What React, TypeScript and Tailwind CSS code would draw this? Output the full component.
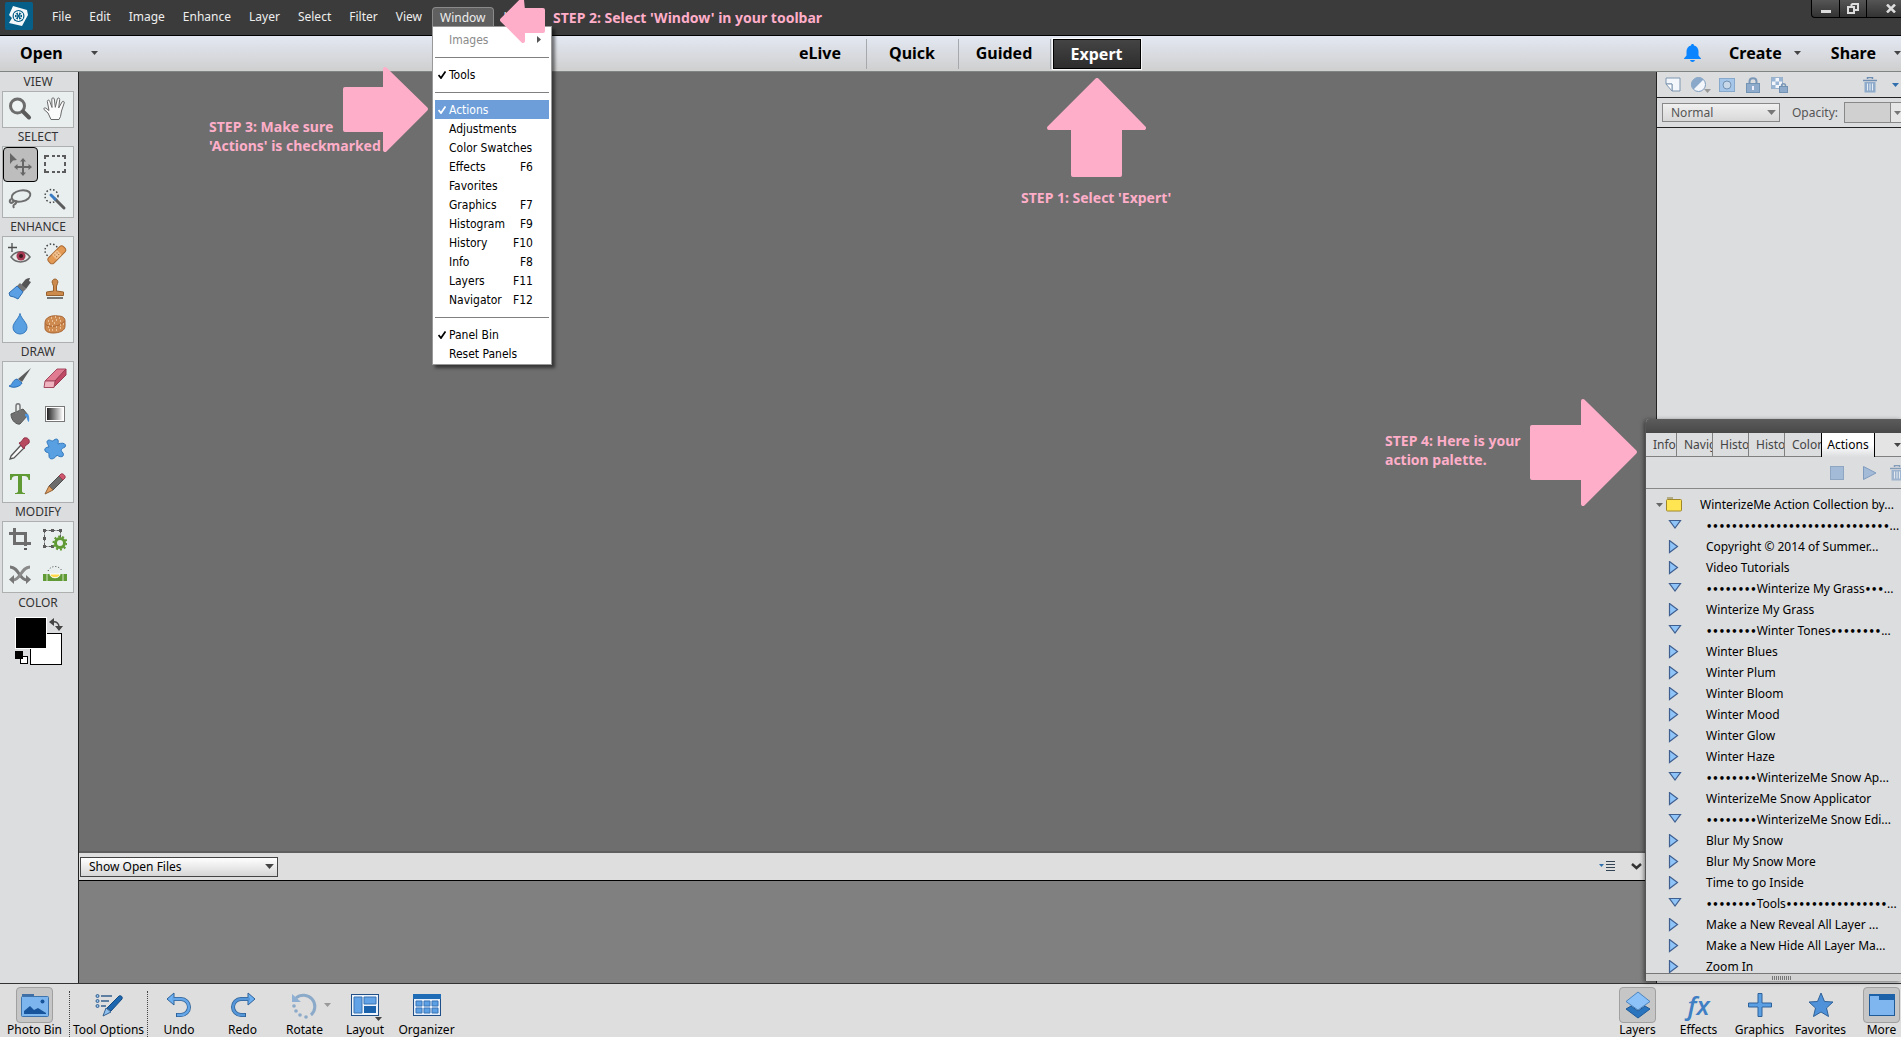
/**
 * App.tsx
 *
 * Photo editor workspace with the Window menu open and the four
 * walkthrough steps drawn over it.
 */

import { useState, type ReactNode } from 'react';

interface ToolGroup {
    title: string;
    tools: { name: string; icon: ReactNode }[];
}

interface MenuEntry {
    label: string;
    shortcut?: string;
    checked?: boolean;
    submenu?: boolean;
}

interface ActionRow {
    label?: string;
    before?: number;
    after?: number;
    more?: boolean;
}

const TOOL_GROUPS: ToolGroup[] = [
    {
        title: 'VIEW',
        tools: [
            {
                name: 'Zoom',
                icon: (
                    <>
                        <circle cx="9.5" cy="9" r="7" fill="#eef3f3" stroke="#6d6d6d" strokeWidth="3" />
                        <path d="M15 14.5l6 6" stroke="#5a5a5a" strokeWidth="4" strokeLinecap="round" />
                    </>
                ),
            },
            {
                name: 'Hand',
                icon: (
                    <path
                        d="M8 22.5L5 16 1 12.5c-.6-1.200.6-2.200 1.800-1.400L6 13.500 4.300 4.500c0-1.700 2-1.900 2.400-.3L9 10.500 8.800 2c.2-1.600 2.200-1.600 2.500 0l1 8.300L14.300 2c.5-1.600 2.500-1.200 2.400.4l-1 8.500 3.400-6c.9-1.300 2.600-.4 2.100 1.100L18.500 14l-1 5.500-1.500 3z"
                        fill="#fbfbfb"
                        stroke="#6a6a6a"
                    />
                ),
            },
        ],
    },
    {
        title: 'SELECT',
        tools: [
            {
                name: 'Move',
                icon: (
                    <>
                        <path d="M2 1v11l3-3.500 4-.5z" fill="#666" />
                        <path
                            d="M15 6l-3 3.500h2V14H9.500v-2L6 15l3.500 3v-2H14v4.500h-2L15 24l3-3.500h-2V16h4.500v2l3.500-3-3.500-3v2H16V9.500h2z"
                            fill="#666"
                        />
                    </>
                ),
            },
            {
                name: 'Marquee',
                icon: (
                    <path
                        d="M2 7V4h4M9 4h3M14 4h3M19 4h3v3M22 10v4M22 17v3h-3M17 20h-3M12 20H9M6 20H2v-3M2 14v-4"
                        fill="none"
                        stroke="#5c5c5c"
                        strokeWidth="2"
                    />
                ),
            },
            {
                name: 'Lasso',
                icon: (
                    <>
                        <ellipse cx="13" cy="9" rx="9.500" ry="5.500" transform="rotate(-12 13 9)" fill="none" stroke="#6d6d6d" strokeWidth="2" />
                        <path d="M3 12c-3 3 0 5 2 3s4-1 3 1-4 1-2 5" fill="none" stroke="#6d6d6d" strokeWidth="2" />
                    </>
                ),
            },
            {
                name: 'Quick selection',
                icon: (
                    <>
                        <circle cx="8.500" cy="9" r="6.500" fill="none" stroke="#444" strokeWidth="1.500" strokeDasharray="1.500 2" />
                        <path d="M12 12l9 9" stroke="#5c5c5c" strokeWidth="3" strokeLinecap="round" />
                        <path d="M8 8l4 4" stroke="#3a7cc4" strokeWidth="3" strokeLinecap="round" />
                    </>
                ),
            },
        ],
    },
    {
        title: 'ENHANCE',
        tools: [
            {
                name: 'Red eye',
                icon: (
                    <>
                        <path d="M4 1v9M0 5.500h9" stroke="#4d4d4d" strokeWidth="1.300" />
                        <path d="M3 15c5-7 14-7 19 0-5 6.500-14 6.500-19 0z" fill="#e8eaea" stroke="#6a6a6a" strokeWidth="1.500" />
                        <circle cx="13" cy="14" r="4.500" fill="#a63a52" />
                        <circle cx="13" cy="14" r="2" fill="#3a1a22" />
                    </>
                ),
            },
            {
                name: 'Spot healing',
                icon: (
                    <>
                        <circle cx="8.500" cy="8.500" r="6.500" fill="none" stroke="#444" strokeWidth="1.500" strokeDasharray="1.500 2" />
                        <g transform="rotate(-45 14 13)">
                            <rect x="3.500" y="9" width="21" height="7.500" rx="3" fill="#e39a55" stroke="#a96a33" />
                            <rect x="10.500" y="9.500" width="7" height="6.500" fill="#f2c08c" />
                            <path d="M12 11.500h1M15 11.500h1M12 14h1M15 14h1" stroke="#94602f" />
                        </g>
                    </>
                ),
            },
            {
                name: 'Smart brush',
                icon: (
                    <>
                        <path d="M13 8l4-5c1-1 2-2 5-2l-1 3 2 1-5 7z" fill="#555" />
                        <path d="M12 6l6 6-3 3-6-6z" fill="#747474" />
                        <path d="M9 9l6 6-5 7-4-2-4-1-1-3z" fill="#5b9fe4" stroke="#2f6eb0" />
                    </>
                ),
            },
            {
                name: 'Clone stamp',
                icon: (
                    <>
                        <path
                            d="M12 2a3 3 0 0 0-2.500 4.500L10.500 9v5L3.500 15v3.500h17V15l-7-1V9l1-2.500A3 3 0 0 0 12 2z"
                            fill="#cc8a4d"
                            stroke="#97602c"
                        />
                        <path d="M4 21h16" stroke="#4d4d4d" strokeWidth="1.500" />
                    </>
                ),
            },
            {
                name: 'Blur',
                icon: <path d="M12 1.500c1 5 7 9 7 14a7 6.500 0 0 1-14 0c0-5 6-9 7-14z" fill="#58a0e2" stroke="#3478bc" />,
            },
            {
                name: 'Sponge',
                icon: (
                    <>
                        <path d="M2 11c0-6 7-8 13-7 5 0 7 2 7 5v5c0 5-6 7-12 7-5 0-8-2-8-5z" fill="#cf8a50" stroke="#a86532" />
                        <path d="M2.500 12c3 4 15 3 19-3" fill="none" stroke="#a86532" />
                        <path
                            d="M5 9h1M8 6h1M9 9h1M12 5h1M13 8h1M16 6h1M17 9h1M6 12h1M11 11h1M5 15h1M6 18h1M9 14h1M9 18h1M13 15h1M13 18h1M17 13h1M17 16h1M20 12h1"
                            stroke="#f4d2b0"
                            strokeWidth="1.500"
                        />
                    </>
                ),
            },
        ],
    },
    {
        title: 'DRAW',
        tools: [
            {
                name: 'Brush',
                icon: (
                    <>
                        <path d="M10 12L23 1l-9 14z" fill="#5c5c5c" />
                        <path d="M9 12l5 4c-1 3-8 6-13 3 4-1 3-6 8-7z" fill="#4d97e0" stroke="#2e6fb5" />
                    </>
                ),
            },
            {
                name: 'Eraser',
                icon: (
                    <>
                        <path d="M2 14L14 2h9L12 14z" fill="#e07b92" stroke="#a34a60" />
                        <path d="M12 14L23 2v6L11 20z" fill="#c04a66" stroke="#9a3a52" />
                        <path d="M2 14h10l-1 6.500H1z" fill="#f0b3c0" stroke="#a34a60" />
                    </>
                ),
            },
            {
                name: 'Paint bucket',
                icon: (
                    <>
                        <path d="M3 12l12-5 5 6-8 9c-3 1-9-3-9-10z" fill="#707070" stroke="#555" />
                        <path d="M8 12V4c0-3 4-3 4 0v6" fill="none" stroke="#777" strokeWidth="1.500" />
                        <path d="M17 12c3-1 5 1 4 8-3-2-1-5-4-6z" fill="#4d97e0" />
                    </>
                ),
            },
            {
                name: 'Gradient',
                icon: (
                    <>
                        <defs>
                            <linearGradient id="toolGradient">
                                <stop offset="0" stopColor="#222" />
                                <stop offset="1" stopColor="#fff" />
                            </linearGradient>
                        </defs>
                        <rect x="2.500" y="4.500" width="19" height="15" fill="#fff" stroke="#777" />
                        <rect x="4" y="6" width="16" height="12" fill="url(#toolGradient)" />
                    </>
                ),
            },
            {
                name: 'Eyedropper',
                icon: (
                    <>
                        <path d="M3 19L13 8l3 3L6 21l-4 1z" fill="#fafafa" stroke="#555" strokeWidth="1.300" />
                        <path d="M11 6l2-1 3-4c4-1 6 2 5 5l-4 3-1 3z" fill="#b84a60" stroke="#90344a" />
                    </>
                ),
            },
            {
                name: 'Custom shape',
                icon: (
                    <path
                        d="M11 3c3-2 5-1 4 4 5-2 9 0 7 3-4 2-5 3-2 6 2 4-3 5-6 2-3 5-8 5-8 1 0-3 0-3-3-4-3-3 0-5 3-5-1-3-4-6 0-7 2 0 3 2 5 0z"
                        fill="#58a0e2"
                        stroke="#3478bc"
                    />
                ),
            },
            {
                name: 'Type',
                icon: (
                    <path d="M2 2h20v6h-1.500c-.5-3-1.500-4-4-4H14v15c0 1.500 1 2 3 2v1H7v-1c2 0 3-.5 3-2V4H7.500C5 4 4 5 3.500 8H2z" fill="#5f9a34" />
                ),
            },
            {
                name: 'Pencil',
                icon: (
                    <>
                        <path d="M6 14L16 4l4 4L10 18z" fill="#6c6c6c" stroke="#505050" />
                        <path d="M16 4l2-2c2-1 5 2 4 4l-2 2z" fill="#d0586e" stroke="#9c3c50" />
                        <path d="M6 14l4 4-8 4z" fill="#e3a063" stroke="#8f6136" />
                    </>
                ),
            },
        ],
    },
    {
        title: 'MODIFY',
        tools: [
            {
                name: 'Crop',
                icon: (
                    <>
                        <path d="M6.500 1v15.500H23M1 6.500h16.500V19" fill="none" stroke="#6d6d6d" strokeWidth="3" />
                        <path d="M16 21h3v2h-3z" fill="#5a5a5a" />
                    </>
                ),
            },
            {
                name: 'Recompose',
                icon: (
                    <>
                        <path d="M1.500 3.500h16v8M1.500 3.500v16h9" fill="none" stroke="#5c5c5c" strokeDasharray="3 1" />
                        <path d="M0 2h3v3H0zM8 2h3v3H8zM16 2h3v3h-3zM0 10h3v3H0zM0 18h3v3H0zM8 18h3v3H8z" fill="#5c5c5c" />
                        <circle cx="17" cy="16" r="4.500" fill="none" stroke="#5f9a34" strokeWidth="3" />
                        <circle cx="17" cy="16" r="6.500" fill="none" stroke="#5f9a34" strokeWidth="2" strokeDasharray="2 2" />
                    </>
                ),
            },
            {
                name: 'Content-aware move',
                icon: (
                    <>
                        <path d="M2 5c9 0 9 13 17 13" fill="none" stroke="#777" strokeWidth="3" />
                        <path d="M22 5C13 5 13 18 5 18" fill="none" stroke="#8a8a8a" strokeWidth="3" />
                        <path d="M6 13v9l-5-4.500zM18 13v9l5-4.500z" fill="#777" />
                    </>
                ),
            },
            {
                name: 'Straighten',
                icon: (
                    <>
                        <path d="M5 9c3-6 11-6 14 0" fill="none" stroke="#444" strokeDasharray="1 2" />
                        <path d="M0 12h24v7H0z" fill="#5f9a34" />
                        <path d="M4 12v7M20 12v7" stroke="#d5e5c5" />
                        <path d="M7 12h10c0 5-10 5-10 0z" fill="#ffd94a" stroke="#fff" />
                    </>
                ),
            },
        ],
    },
];

const MENUS = ['File', 'Edit', 'Image', 'Enhance', 'Layer', 'Select', 'Filter', 'View'];

const WINDOW_MENU: MenuEntry[][] = [
    [{ label: 'Images', submenu: true }],
    [{ label: 'Tools', checked: true }],
    [
        { label: 'Actions', checked: true },
        { label: 'Adjustments' },
        { label: 'Color Swatches' },
        { label: 'Effects', shortcut: 'F6' },
        { label: 'Favorites' },
        { label: 'Graphics', shortcut: 'F7' },
        { label: 'Histogram', shortcut: 'F9' },
        { label: 'History', shortcut: 'F10' },
        { label: 'Info', shortcut: 'F8' },
        { label: 'Layers', shortcut: 'F11' },
        { label: 'Navigator', shortcut: 'F12' },
    ],
    [{ label: 'Panel Bin', checked: true }, { label: 'Reset Panels' }],
];

const PALETTE_TABS = ['Info', 'Navig', 'Histo', 'Histo', 'Color'];

// before / after count the bullets around a section heading
const ACTIONS: ActionRow[] = [
    { before: 29, more: true },
    { label: 'Copyright © 2014 of Summer...' },
    { label: 'Video Tutorials' },
    { label: 'Winterize My Grass', before: 8, after: 3, more: true },
    { label: 'Winterize My Grass' },
    { label: 'Winter Tones', before: 8, after: 8, more: true },
    { label: 'Winter Blues' },
    { label: 'Winter Plum' },
    { label: 'Winter Bloom' },
    { label: 'Winter Mood' },
    { label: 'Winter Glow' },
    { label: 'Winter Haze' },
    { label: 'WinterizeMe Snow Ap', before: 8, more: true },
    { label: 'WinterizeMe Snow Applicator' },
    { label: 'WinterizeMe Snow Edi', before: 8, more: true },
    { label: 'Blur My Snow' },
    { label: 'Blur My Snow More' },
    { label: 'Time to go Inside' },
    { label: 'Tools', before: 8, after: 16, more: true },
    { label: 'Make a New Reveal All Layer ...' },
    { label: 'Make a New Hide All Layer Ma...' },
    { label: 'Zoom In' },
];

function Caret({ className = 'text-[#444]', size = 7 }: { className?: string; size?: number }) {
    return (
        <svg width={size} height={size === 7 ? 4 : 5} viewBox="0 0 7 4" className={`shrink-0 ${className}`}>
            <path d="M0 0h7L3.500 4z" fill="currentColor" />
        </svg>
    );
}

function Bullets({ count = 0 }: { count?: number }) {
    return (
        <span className="font-['DejaVu_Sans_Condensed','DejaVu_Sans',sans-serif] text-[11px] font-bold">{'•'.repeat(count)}</span>
    );
}

function TrashIcon() {
    return (
        <svg width="16" height="16" viewBox="0 0 16 16" className="shrink-0">
            <path d="M5.500 2V.5h5V2M1 3.500h14" fill="none" stroke="#6f8fb2" strokeWidth="1.500" />
            <path d="M2.500 5h11v10.500h-11z" fill="#8fabcb" />
            <path d="M5.500 6.500v7M8 6.500v7M10.500 6.500v7" stroke="#e6edf5" />
        </svg>
    );
}

function MenuBar() {
    return (
        <header className="relative z-20 flex h-9 shrink-0 items-start justify-between border-b border-black bg-[#3b3b3b]">
            <div className="flex items-start">
                <svg width="28" height="28" viewBox="0 0 28 28" className="mt-[2px] ml-[5px]">
                    <rect width="28" height="28" rx="2" fill="#065f88" />
                    <path d="M8 4l14 4 1 5-6 11-13-3 3-5-3-3z" fill="#f4f8fa" />
                    <circle cx="13.500" cy="14" r="6" fill="#065f88" />
                    <circle cx="13.500" cy="14" r="4.200" fill="none" stroke="#f4f8fa" strokeWidth="1.200" />
                    <path d="M13.500 9v10M9 11.500l9 5M9 16.500l9-5" stroke="#f4f8fa" />
                    <circle cx="13.500" cy="14" r="1.500" fill="#065f88" />
                </svg>
                <nav className="mt-[7px] ml-[11px] flex gap-[2px]">
                    {MENUS.map((menu) => (
                        <button key={menu} className="h-5 px-2 leading-5 text-[#eee]">
                            {menu}
                        </button>
                    ))}
                    <div className="relative">
                        <button className="h-5 rounded-t-sm border border-b-0 border-[#8a8a8a] bg-[#606060] px-[7px] leading-[18px] text-[#eee]">
                            Window
                        </button>
                        <WindowMenu />
                    </div>
                    <button className="h-5 px-2 leading-5 text-[#eee]">Help</button>
                </nav>
            </div>
            <div className="flex h-[18px] rounded-bl-sm border-b border-l border-black bg-gradient-to-b from-[#555] to-[#333] text-[#ddd]">
                <button aria-label="Minimize" className="flex w-7 items-center justify-center border-r border-black">
                    <svg width="10" height="10" viewBox="0 0 10 10">
                        <path d="M0 6h10v3H0z" fill="currentColor" />
                    </svg>
                </button>
                <button aria-label="Restore" className="flex w-[27px] items-center justify-center border-r border-black">
                    <svg width="12" height="11" viewBox="0 0 12 11">
                        <path d="M4.500 1h6.500v6H8M4.500 1v3M1 4h6v6H1z" fill="none" stroke="currentColor" strokeWidth="2" />
                    </svg>
                </button>
                <button aria-label="Close" className="flex w-[34px] items-center justify-end pr-[5px]">
                    <svg width="10" height="9" viewBox="0 0 10 9">
                        <path d="M1 0.500l8 8M9 .5l-8 8" stroke="currentColor" strokeWidth="2.500" />
                    </svg>
                </button>
            </div>
        </header>
    );
}

function WindowMenu() {
    return (
        <div
            role="menu"
            className="absolute top-[19px] left-0 w-[120px] border border-[#999] bg-white px-[2px] pt-[3px] pb-px font-['DejaVu_Sans_Condensed','DejaVu_Sans',sans-serif] text-xs text-black shadow-[3px_3px_3px_rgba(0,0,0,0.5)]"
        >
            {WINDOW_MENU.map((section, index) => (
                <div key={index}>
                    {index > 0 && <div className="mt-2 mb-[7px] h-px bg-[#808080]" />}
                    {section.map((entry) => (
                        <button
                            key={entry.label}
                            role="menuitem"
                            className={`flex h-[19px] w-full items-center pr-4 text-left ${
                                entry.label === 'Actions' ? 'bg-[#6d9ed9] text-white' : entry.submenu ? 'text-[#8a8a8a]' : ''
                            }`}
                        >
                            <span className="flex w-[14px] shrink-0 justify-center">
                                {entry.checked && (
                                    <svg width="8" height="8" viewBox="0 0 8 8">
                                        <path d="M.5 4l2.500 3 4.500-6.500" fill="none" stroke="currentColor" strokeWidth="1.800" />
                                    </svg>
                                )}
                            </span>
                            <span className="flex-1 whitespace-nowrap">{entry.label}</span>
                            {entry.shortcut && <span>{entry.shortcut}</span>}
                            {entry.submenu && (
                                <svg width="4" height="7" viewBox="0 0 4 7" className="-mr-2">
                                    <path d="M0 0l4 3.500L0 7z" fill="#555" />
                                </svg>
                            )}
                        </button>
                    ))}
                </div>
            ))}
        </div>
    );
}

function ModeBar() {
    const [mode, setMode] = useState('Expert');

    return (
        <div className="grid h-9 shrink-0 grid-cols-[1fr_auto_1fr] items-center border-b border-[#808482] bg-gradient-to-b from-[#e3e8f2] to-[#cfcfcf] text-base font-bold text-black">
            <div className="flex items-center pb-[2px] pl-5">
                <button className="flex items-center gap-7">
                    Open <Caret />
                </button>
            </div>
            <nav className="flex pl-4">
                {['eLive', 'Quick', 'Guided', 'Expert'].map((name) => (
                    <button
                        key={name}
                        onClick={() => setMode(name)}
                        className={
                            name === mode
                                ? 'mx-[2px] h-[30px] w-[88px] border border-black bg-gradient-to-b from-[#444] to-[#2d2d2d] text-white outline outline-white/80'
                                : 'h-[30px] w-[92px] border-r border-[#a5a8ad] pb-px'
                        }
                    >
                        {name}
                    </button>
                ))}
            </nav>
            <div className="flex items-center justify-end pb-[2px]">
                <button aria-label="Notifications" className="mr-7">
                    <svg width="17" height="18" viewBox="0 0 17 18">
                        <path
                            d="M8.500 0c1 0 1.500.7 1.500 1.500 3 .8 4.500 3 4.500 6v4l2.500 3v.5H0v-.5l2.500-3v-4c0-3 1.500-5.200 4.500-6C7 .7 7.500 0 8.500 0zM6 16h5c-.5 2.600-4.500 2.600-5 0z"
                            fill="#0a84ff"
                        />
                    </svg>
                </button>
                <button className="mr-[30px] flex items-center gap-3">
                    Create <Caret />
                </button>
                <button className="flex items-center gap-[18px]">
                    Share <Caret />
                </button>
            </div>
        </div>
    );
}

function ToolPanel() {
    const [active, setActive] = useState('Move');

    return (
        <aside className="w-[79px] shrink-0 border-r border-[#222] bg-[#dcdddf] pr-1 pl-[2px]">
            {TOOL_GROUPS.map((group) => (
                <section key={group.title}>
                    <h2 className="h-[19px] text-center leading-5 text-[#333]">{group.title}</h2>
                    <div className="grid grid-cols-2 border border-b-0 border-[#aeb0b0] bg-[#e9efef] shadow-[0_1px_0_#aeb0b0]">
                        {group.tools.map((tool) => (
                            <button
                                key={tool.name}
                                aria-label={tool.name}
                                onClick={() => setActive(tool.name)}
                                className={`flex h-[35px] items-center justify-center pr-[2px] pb-[2px] ${
                                    tool.name === active ? 'rounded border border-black bg-[#bdbdbd]' : ''
                                }`}
                            >
                                <svg width="24" height="24" viewBox="0 0 24 24" fill="none">
                                    {tool.icon}
                                </svg>
                            </button>
                        ))}
                    </div>
                </section>
            ))}
            <h2 className="h-[25px] text-center leading-[22px] text-[#333]">COLOR</h2>
            <button aria-label="Foreground and background colors" className="block pl-[13px]">
                <svg width="48" height="48" viewBox="0 0 48 48">
                    <rect x="15.500" y="16.500" width="31" height="31" fill="#fff" stroke="#000" />
                    <rect x=".5" y=".5" width="31" height="31" fill="#000" stroke="#fff" />
                    <rect x="5.500" y="39.500" width="7" height="7" fill="#fff" stroke="#000" />
                    <rect x="0" y="34" width="8" height="8" fill="#000" />
                    <path d="M37 5c5-1 7 2 7 5" fill="none" stroke="#444" strokeWidth="1.500" />
                    <path d="M34 5l5-4v8zM40 9h8l-4 5z" fill="#444" />
                </svg>
            </button>
        </aside>
    );
}

function PhotoBin() {
    return (
        <section>
            <div className="flex h-7 items-center justify-between border-b border-black bg-[#dedede] pr-[14px] pl-px">
                <div className="relative flex items-center">
                    <select
                        aria-label="Photo bin source"
                        className="h-5 w-[198px] appearance-none border border-[#444] bg-gradient-to-b from-white to-[#d6d6d6] pl-2 text-black"
                    >
                        <option>Show Open Files</option>
                    </select>
                    <span className="pointer-events-none absolute right-1">
                        <Caret size={9} />
                    </span>
                </div>
                <div className="flex items-center gap-4">
                    <button aria-label="Bin options">
                        <svg width="16" height="11" viewBox="0 0 16 11">
                            <path d="M0 3h5L2.500 6z" fill="#2f6fae" />
                            <path d="M7 .5h9M7 3.500h9M7 6.500h9M7 9.500h9" stroke="#345" />
                        </svg>
                    </button>
                    <button aria-label="Collapse bin">
                        <svg width="11" height="7" viewBox="0 0 11 7">
                            <path d="M1 1l4.500 4L10 1" fill="none" stroke="#333" strokeWidth="2.500" />
                        </svg>
                    </button>
                </div>
            </div>
            <div className="h-[102px] bg-[#808080]" />
        </section>
    );
}

function LayersPanel() {
    return (
        <aside className="w-[245px] shrink-0 overflow-hidden border-l border-[#222] bg-[#dcdddf]">
            <div className="flex h-[26px] items-center border-b border-[#222] pr-[2px] pl-2">
                <div className="flex flex-1 items-center gap-[10px]">
                    <button aria-label="New layer">
                        <svg width="16" height="15" viewBox="0 0 16 15">
                            <path d="M1 1h14v13H7V7H1z" fill="#f3f6fa" stroke="#7d95b0" />
                            <path d="M1 7h6v7z" fill="#fff" stroke="#7d95b0" />
                        </svg>
                    </button>
                    <button aria-label="New fill or adjustment layer">
                        <svg width="20" height="16" viewBox="0 0 20 16">
                            <circle cx="7.500" cy="7.500" r="7" fill="#f3f6fa" stroke="#7d9cbe" />
                            <path d="M12.500 2.500a7 7 0 0 0-10 10z" fill="#8aa9ca" />
                            <path d="M13 12h7l-3.500 4z" fill="#999" />
                        </svg>
                    </button>
                    <button aria-label="Add mask" className="-ml-[2px]">
                        <svg width="16" height="14" viewBox="0 0 16 14">
                            <rect x=".5" y=".5" width="15" height="13" fill="#a5c6e8" stroke="#86a9cc" />
                            <circle cx="8" cy="7" r="4" fill="#c8d8e8" stroke="#7393b5" />
                        </svg>
                    </button>
                    <button aria-label="Lock layer">
                        <svg width="14" height="16" viewBox="0 0 14 16" className="mx-px">
                            <path d="M3.500 7V4.500c0-4.500 7-4.500 7 0V7" fill="none" stroke="#7b98b8" strokeWidth="2" />
                            <rect x=".5" y="6.500" width="13" height="9" fill="#8fabcb" stroke="#7393b5" />
                            <path d="M7 9v4" stroke="#eef" strokeWidth="2" />
                        </svg>
                    </button>
                    <button aria-label="Lock transparency">
                        <svg width="17" height="16" viewBox="0 0 17 16">
                            <rect x=".5" y=".5" width="11" height="11" fill="#f3f6fa" stroke="#9ab2cc" />
                            <path d="M1 1h3.500v3.500H1zM8 1h3.500v3.500H8zM4.500 4.500H8V8H4.500zM1 8h3.500v3.500H1z" fill="#9ab6d4" />
                            <path d="M10.500 10V8.500c0-2.500 4-2.500 4 0V10" fill="none" stroke="#7b98b8" strokeWidth="1.500" />
                            <rect x="8.500" y="9.500" width="8" height="6" fill="#8fabcb" stroke="#7393b5" />
                        </svg>
                    </button>
                </div>
                <button aria-label="Delete layer" className="mr-[14px]">
                    <TrashIcon />
                </button>
                <Caret className="text-[#2f6fae]" />
            </div>
            <div className="flex h-[30px] items-center border-b border-[#222] pl-[5px] text-[#555]">
                <div className="relative mr-3 flex items-center">
                    <select
                        aria-label="Blend mode"
                        className="h-[19px] w-[118px] appearance-none border border-[#888] bg-gradient-to-b from-[#f0f0f0] to-[#d8d8d8] pl-2"
                    >
                        <option>Normal</option>
                    </select>
                    <span className="pointer-events-none absolute right-1">
                        <Caret size={9} className="text-[#777]" />
                    </span>
                </div>
                <label htmlFor="opacity" className="w-[54px]">
                    Opacity:
                </label>
                <input id="opacity" className="h-[21px] w-[47px] border border-[#888] bg-[#d0d0d0]" />
                <button aria-label="Opacity slider" className="flex h-[21px] flex-1 items-center border-y border-[#888] bg-[#e6e6e6] pl-[3px]">
                    <Caret className="text-[#777]" />
                </button>
            </div>
        </aside>
    );
}

function ActionsPalette() {
    return (
        <section className="absolute top-[347px] right-0 bottom-[2px] z-10 flex w-[256px] flex-col overflow-hidden rounded-tl border-l border-[#555] bg-[#dcdddf] text-black shadow-[-1px_1px_4px_rgba(0,0,0,0.5)]">
            <div className="h-[14px] shrink-0 bg-gradient-to-b from-[#5c5c5c] to-[#484848]" />
            <div className="flex h-6 shrink-0 text-[#444]">
                {PALETTE_TABS.map((tab, index) => (
                    <button
                        key={index}
                        className={`shrink-0 overflow-hidden border-b border-[#808080] pl-[7px] text-left whitespace-nowrap ${
                            index === 0 ? 'w-[31px] border-r' : index === 4 ? 'w-9' : 'w-9 border-r'
                        }`}
                    >
                        {tab}
                    </button>
                ))}
                <button className="w-[54px] shrink-0 border-x border-black bg-gradient-to-b from-white via-white to-[#dcdddf] text-black">
                    Actions
                </button>
                <button aria-label="Palette options" className="flex flex-1 items-center justify-end border-b border-[#808080] bg-[#e4e4e4]">
                    <Caret />
                </button>
            </div>
            <div className="flex h-8 shrink-0 items-center justify-end border-b border-[#888]">
                <button aria-label="Stop" className="mr-[19px]">
                    <svg width="14" height="14" viewBox="0 0 14 14">
                        <rect x=".5" y=".5" width="13" height="13" fill="#a3bbd6" stroke="#8ea6c2" />
                    </svg>
                </button>
                <button aria-label="Play" className="mr-3">
                    <svg width="14" height="14" viewBox="0 0 14 14">
                        <path d="M.5.5L13 7 .5 13.500z" fill="#a3bbd6" stroke="#7f9cbe" />
                    </svg>
                </button>
                <button aria-label="Delete action" className="-mr-1 opacity-80">
                    <TrashIcon />
                </button>
            </div>
            <ul className="min-h-0 flex-1 overflow-hidden pt-[5px] leading-[21px] whitespace-nowrap">
                <li className="flex h-[21px] items-center pl-[10px]">
                    <Caret className="mr-[3px] text-[#666]" />
                    <svg width="17" height="15" viewBox="0 0 17 15" className="mr-[17px] shrink-0">
                        <path d="M1 1h6" stroke="#8a7a30" />
                        <rect x=".5" y="2.500" width="15" height="11.500" rx="1" fill="#ffe552" stroke="#a0882a" />
                    </svg>
                    WinterizeMe Action Collection by...
                </li>
                {ACTIONS.map((row, index) => (
                    <li key={index} className="flex h-[21px] items-center pl-[22px]">
                        <svg width="14" height="14" viewBox="0 0 14 14" className="mr-6 shrink-0">
                            <path
                                d={row.before ? 'M1.500 1.500h11L7 9z' : 'M1.500 .5v12L9.500 6.500z'}
                                fill="#8fc4f8"
                                stroke="#3f5f90"
                                strokeWidth="1.200"
                            />
                        </svg>
                        <span>
                            {row.before && <Bullets count={row.before} />}
                            {row.label}
                            {row.after && <Bullets count={row.after} />}
                            {row.more && '...'}
                        </span>
                    </li>
                ))}
            </ul>
            <div className="flex h-2 shrink-0 items-center justify-center border-t border-[#777] bg-[#d2d2d2] pl-4">
                <svg width="20" height="4" viewBox="0 0 20 4">
                    <path d="M.5 0v4M2.500 0v4M4.500 0v4M6.500 0v4M8.500 0v4M10.500 0v4M12.500 0v4M14.500 0v4M16.500 0v4M18.500 0v4" stroke="#777" />
                </svg>
            </div>
        </section>
    );
}

function BarButton({ label, pressed, className = 'w-[61px]', children }: { label: string; pressed?: boolean; className?: string; children: ReactNode }) {
    return (
        <button className={`flex shrink-0 flex-col items-center whitespace-nowrap ${className}`}>
            <span
                className={`flex h-9 w-[37px] shrink-0 items-center justify-center ${
                    pressed ? 'rounded-sm border border-[#a0a0a0] bg-[#c6c6c6]' : ''
                }`}
            >
                {children}
            </span>
            <span className="leading-[14px]">{label}</span>
        </button>
    );
}

function TaskBar() {
    return (
        <footer className="flex h-[54px] shrink-0 justify-between overflow-hidden border-t border-[#333] bg-[#dedede] pt-[3px] text-black">
            <div className="flex">
                <BarButton label="Photo Bin" pressed className="w-[69px]">
                    <svg width="28" height="24" viewBox="0 0 28 24">
                        <path d="M1 1h12v3H1z" fill="#3f6fa5" />
                        <rect x=".5" y="3.500" width="27" height="20" rx="1" fill="#7db5ee" stroke="#3d74ad" />
                        <path d="M3 21v-3l6-5 4 4 4-2 8 5v1z" fill="#17549b" />
                        <circle cx="21.500" cy="8.500" r="2" fill="#17549b" />
                    </svg>
                </BarButton>
                <div className="mt-1 h-12 border-l border-dotted border-[#444]" />
                <BarButton label="Tool Options" className="w-[77px]">
                    <svg width="28" height="24" viewBox="0 0 28 24">
                        <path d="M6 3h11M6 8h8M6 13h5" stroke="#35608f" strokeWidth="1.500" />
                        <circle cx="2.500" cy="3" r="1.500" fill="#8fc0f0" stroke="#35608f" />
                        <circle cx="2.500" cy="8" r="1.500" fill="#8fc0f0" stroke="#35608f" />
                        <circle cx="2.500" cy="13" r="1.500" fill="#8fc0f0" stroke="#35608f" />
                        <path d="M12 15L24 3c2-1 4 1 3 3L16 18z" fill="#1d66b0" stroke="#134a80" />
                        <path d="M11 15l5 4-8 4z" fill="#8fc0f0" stroke="#35608f" />
                    </svg>
                </BarButton>
                <div className="mt-1 h-12 border-l border-dotted border-[#444]" />
                <BarButton label="Undo" className="w-[62px]">
                    <svg width="26" height="26" viewBox="0 0 26 26">
                        <path d="M7 7h8a8 8 0 0 1 0 16h-5" fill="none" stroke="#2f6298" strokeWidth="4" />
                        <path d="M8 1v12L1 7z" fill="#6db0f2" stroke="#2f6298" />
                        <path d="M6 7h9a8 8 0 0 1 0 16h-4" fill="none" stroke="#64a6e8" strokeWidth="2.500" />
                    </svg>
                </BarButton>
                <BarButton label="Redo" className="w-[65px]">
                    <svg width="26" height="26" viewBox="0 0 26 26">
                        <path d="M19 7h-8a8 8 0 0 0 0 16h5" fill="none" stroke="#2f6298" strokeWidth="4" />
                        <path d="M18 1v12l7-6z" fill="#6db0f2" stroke="#2f6298" />
                        <path d="M20 7h-9a8 8 0 0 0 0 16h4" fill="none" stroke="#5596d8" strokeWidth="2.500" />
                    </svg>
                </BarButton>
                <div className="relative">
                    <BarButton label="Rotate" className="w-[59px]">
                        <svg width="28" height="28" viewBox="0 0 28 28">
                            <path d="M5 7a11 11 0 1 1 15 17" fill="none" stroke="#8ba9c8" strokeWidth="3" />
                            <path d="M1 3v8h9z" fill="#8fb0d2" />
                            <circle cx="3" cy="15" r="1.800" fill="#8ba9c8" />
                            <circle cx="5" cy="20" r="1.800" fill="#8ba9c8" />
                            <circle cx="9" cy="24" r="1.800" fill="#8ba9c8" />
                            <circle cx="15" cy="26" r="1.800" fill="#8ba9c8" />
                        </svg>
                    </BarButton>
                    <span className="pointer-events-none absolute top-4 right-[3px] leading-none">
                        <Caret className="text-[#999]" />
                    </span>
                </div>
                <div className="relative">
                    <BarButton label="Layout" className="w-[62px]">
                        <svg width="28" height="22" viewBox="0 0 28 22">
                            <rect x=".5" y=".5" width="27" height="21" fill="#eef4fb" stroke="#1f4f86" />
                            <path d="M3 3h8v16H3zM13 3h12v7H13z" fill="#62a2e6" stroke="#3a74b4" />
                            <path d="M13 12h12v7H13z" fill="#1a62ac" />
                        </svg>
                    </BarButton>
                    <span className="pointer-events-none absolute top-[30px] right-[14px] leading-none">
                        <Caret />
                    </span>
                </div>
                <BarButton label="Organizer">
                    <svg width="28" height="22" viewBox="0 0 28 22">
                        <rect x=".5" y=".5" width="27" height="21" fill="#e4eefa" stroke="#1f4f86" />
                        <path d="M0 0h28v5H0z" fill="#1d6cb5" />
                        <path d="M3 7h6v5H3zM11 7h6v5h-6zM19 7h6v5h-6zM3 14h6v5H3zM11 14h6v5h-6zM19 14h6v5h-6z" fill="#5b9fe4" stroke="#3a74b4" />
                    </svg>
                </BarButton>
            </div>
            <div className="-mr-[11px] flex">
                <BarButton label="Layers" pressed>
                    <svg width="28" height="28" viewBox="0 0 28 28">
                        <path d="M2 18l5-3 7 5 7-5 5 3-12 9z" fill="#2b74be" stroke="#1e5a98" />
                        <path d="M14 1l12 9.500L14 19 2 10.500z" fill="#8cc2f8" stroke="#4a84c0" />
                    </svg>
                </BarButton>
                <BarButton label="Effects">
                    <span className="font-['Open_Sans',sans-serif] text-[26px] leading-7 font-semibold text-[#3f7fc4] italic">fx</span>
                </BarButton>
                <BarButton label="Graphics">
                    <svg width="24" height="24" viewBox="0 0 24 24">
                        <path d="M10 .5h4V10h9.500v4H14v9.500h-4V14H.5v-4H10z" fill="#5b9fe4" stroke="#2f6298" />
                    </svg>
                </BarButton>
                <BarButton label="Favorites">
                    <svg width="26" height="26" viewBox="0 0 26 26">
                        <path d="M13 1l3.500 8.500 8.500.5-6.500 6 2 8.500L13 20l-7.500 4.500 2-8.500L1 10l8.500-.5z" fill="#4f92da" stroke="#2f6298" />
                    </svg>
                </BarButton>
                <BarButton label="More" pressed>
                    <svg width="26" height="22" viewBox="0 0 26 22">
                        <rect x=".5" y=".5" width="25" height="21" fill="#7fb6f0" stroke="#1f5a98" />
                        <path d="M0 0h26v6H10V2H0z" fill="#1d62a8" />
                    </svg>
                </BarButton>
            </div>
        </footer>
    );
}

function Arrow({ points, className, width, height }: { points: string; className: string; width: number; height: number }) {
    return (
        <svg width={width} height={height} viewBox={`0 0 ${width} ${height}`} className={`absolute ${className}`}>
            <polygon points={points} fill="#ffaec9" stroke="#ffaec9" strokeWidth="4" strokeLinejoin="round" />
        </svg>
    );
}

function Walkthrough() {
    return (
        <div className="pointer-events-none absolute inset-0 z-30 overflow-hidden font-['Noto_Sans',sans-serif] text-sm leading-[19px] font-bold whitespace-nowrap text-[#ffaec9]">
            <Arrow className="top-[78px] left-[1047px]" width={100} height={100} points="50,2 97,50 73,50 73,97 26,97 26,50 2,50" />
            <p className="absolute top-[188px] left-[1021px]">STEP 1: Select &#39;Expert&#39;</p>

            <Arrow className="top-0 left-[500px]" width={46} height={44} points="2,20 22,0 23,10 43,10 43,31 23,31 23,41" />
            <p className="absolute top-2 left-[553px]">STEP 2: Select &#39;Window&#39; in your toolbar</p>

            <Arrow className="top-[67px] left-[343px]" width={86} height={86} points="2,22 42,22 42,2 83,42 42,83 42,63 2,63" />
            <p className="absolute top-[117px] left-[209px]">
                STEP 3: Make sure
                <br />
                &#39;Actions&#39; is checkmarked
            </p>

            <Arrow className="top-[399px] left-[1530px]" width={108} height={108} points="2,28 53,28 53,2 105,53 53,105 53,79 2,79" />
            <p className="absolute top-[431px] left-[1385px]">
                STEP 4: Here is your
                <br />
                action palette.
            </p>
        </div>
    );
}

export default function App() {
    return (
        <div className="relative flex h-screen flex-col overflow-hidden bg-[#6e6e6e] font-['Noto_Sans',sans-serif] text-xs">
            <MenuBar />
            <ModeBar />
            <div className="relative flex min-h-0 flex-1">
                <ToolPanel />
                <main className="flex min-w-0 flex-1 flex-col">
                    <div className="flex-1 border-b-2 border-[#5e5e5e] bg-[#6e6e6e]" />
                    <PhotoBin />
                </main>
                <LayersPanel />
                <ActionsPalette />
            </div>
            <TaskBar />
            <Walkthrough />
        </div>
    );
}
